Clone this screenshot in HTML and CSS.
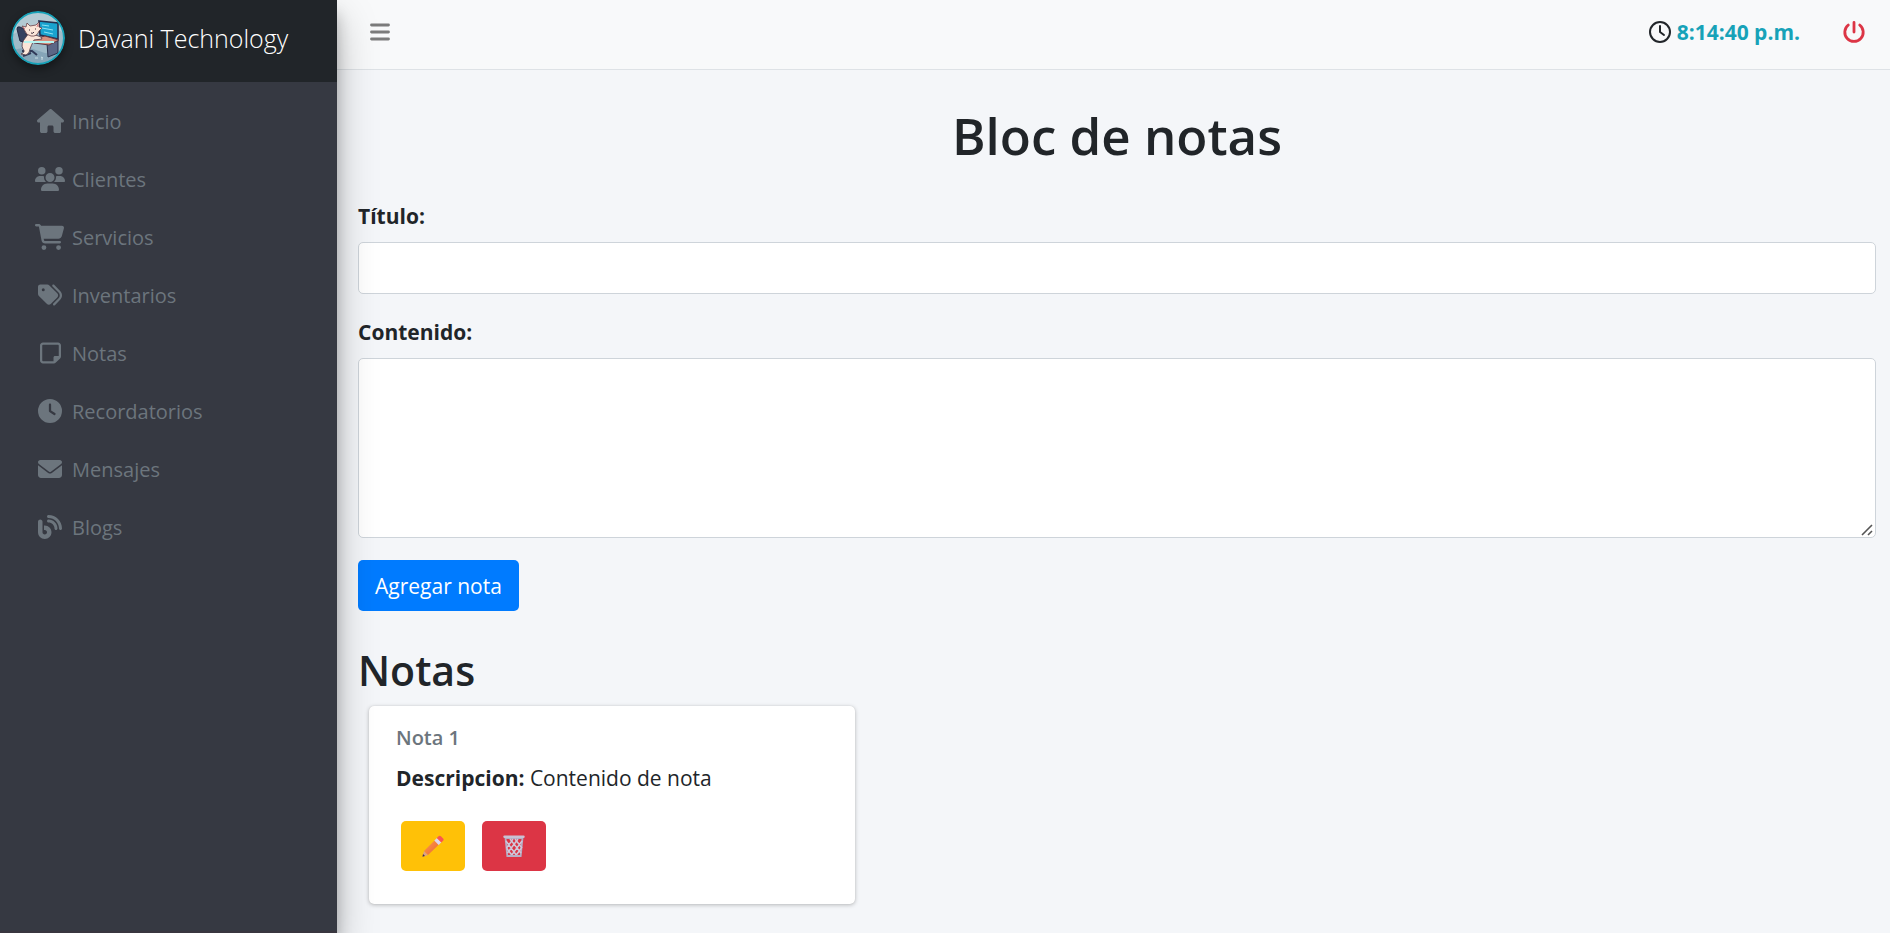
FILE: index.html
```
<!DOCTYPE html>
<html lang="es">
<head>
<meta charset="utf-8">
<meta name="viewport" content="width=device-width, initial-scale=1">
<title>Bloc de notas</title>
<link rel="stylesheet" href="styles.css">
</head>
<body>
<div class="wrapper">
  <aside class="sidebar">
    <a class="brand" href="#">
      <svg class="brand-logo" viewBox="0 0 54 54" aria-hidden="true">
        <defs><clipPath id="disc"><circle cx="27" cy="27" r="26"/></clipPath></defs>
        <g clip-path="url(#disc)">
          <rect width="54" height="54" fill="#9fbac8"/>
          <path d="M0 0h54v22L30 12 0 24z" fill="#b3cad3"/>
          <path d="M0 40q14-6 28 0t26-2v16H0z" fill="#86a5b8"/>
          <path d="M6 18q0-3 3-2l6 3 1 13-7-2z" fill="#35415f" stroke="#222943"/>
          <path d="M11 40h10l5 4M17 36v8M12 45l8-3" stroke="#303a58" stroke-width="2" fill="none"/>
          <path d="M28 10l19 2v16l-18-4z" fill="#1aa3cf" stroke="#25304f" stroke-width="1.6"/>
          <path d="M31 14l7 1M31 17l11 2M33 21l9 2" stroke="#8fe1f2"/>
          <path d="M36 32l11-2v12l-10 4z" fill="#5c6786" stroke="#28304b"/>
          <path d="M22 28l12-3 14 4-10 5-15-2z" fill="#d98f7e" stroke="#5b3845"/>
          <path d="M15 26q2-4 7-3l8 3 1 2-8 1q-3 6-4 9 0 4-4 6l-5-1q5-2 2-5-3-5 3-12z" fill="#fbe6d9" stroke="#4b3543" stroke-width=".8"/>
          <path d="M14 20l-3-5 4 1 1-4 3 3 6-1 3-3v5l3 1-3 3q-2 6-8 5-5-1-6-5z" fill="#fbe6d9" stroke="#6a4048" stroke-width=".8"/>
          <path d="M12 16l2 2M27 13l-1 3" stroke="#dd7f86"/>
          <path d="M18 19h1M24 18h1M20 22q2 1 3-1" stroke="#3b2a38" fill="none"/>
          <path d="M13 31h30" stroke="#b5f4ef" stroke-width="2"/>
          <path d="M24 47h3M30 46l2 1M31 49v-3" stroke="#c7dce3"/>
        </g>
        <circle cx="27" cy="27" r="26" fill="none" stroke="#17a2b8" stroke-width="2"/>
      </svg>
      <span>Davani Technology</span>
    </a>
    <nav class="menu">
      <a href="#"><span class="menu-icon"><svg viewBox="0 0 576 512"><path d="M575.8 255.5c0 18-15 32.1-32 32.1l-32 0 .7 160.2c0 2.7-.2 5.4-.5 8.1l0 16.2c0 22.1-17.9 40-40 40l-16 0c-1.1 0-2.2 0-3.3-.1c-1.4 .1-2.8 .1-4.2 .1L416 512l-24 0c-22.1 0-40-17.9-40-40l0-24 0-64c0-17.7-14.3-32-32-32l-64 0c-17.7 0-32 14.3-32 32l0 64 0 24c0 22.1-17.9 40-40 40l-24 0-31.9 0c-1.5 0-3-.1-4.5-.2c-1.2 .1-2.4 .2-3.6 .2l-16 0c-22.1 0-40-17.9-40-40l0-112c0-.9 0-1.9 .1-2.8l0-69.7-32 0c-18 0-32-14-32-32.1c0-9 3-17 10-24L266.4 8c7-7 15-8 22-8s15 2 21 7L564.8 231.5c8 7 12 15 11 24z"/></svg></span>Inicio</a>
      <a href="#"><span class="menu-icon"><svg viewBox="0 0 640 512"><path d="M144 0a80 80 0 1 1 0 160A80 80 0 1 1 144 0zM512 0a80 80 0 1 1 0 160A80 80 0 1 1 512 0zM0 298.7C0 239.8 47.8 192 106.7 192h42.7c15.9 0 31 3.5 44.6 9.7c-1.3 7.2-1.9 14.7-1.9 22.3c0 38.2 16.8 72.5 43.3 96c-.2 0-.4 0-.7 0H21.3C9.6 320 0 310.4 0 298.7zM405.3 320c-.2 0-.4 0-.7 0c26.6-23.5 43.3-57.8 43.3-96c0-7.6-.7-15-1.9-22.3c13.6-6.3 28.7-9.7 44.6-9.7h42.7C592.2 192 640 239.8 640 298.7c0 11.8-9.6 21.3-21.3 21.3H405.3zM224 224a96 96 0 1 1 192 0 96 96 0 1 1 -192 0zM128 485.3C128 411.7 187.7 352 261.3 352H378.7C452.3 352 512 411.7 512 485.3c0 14.7-11.9 26.7-26.7 26.7H154.7c-14.7 0-26.7-11.9-26.7-26.7z"/></svg></span>Clientes</a>
      <a href="#"><span class="menu-icon menu-icon-cart"><svg viewBox="0 0 576 512"><path d="M0 24C0 10.7 10.7 0 24 0H69.5c22 0 41.5 12.8 50.6 32h411c26.3 0 45.5 25 38.6 50.4l-41 152.3c-8.5 31.4-37 53.3-69.5 53.3H170.7l5.4 28.5c2.2 11.3 12.1 19.5 23.6 19.5H488c13.3 0 24 10.7 24 24s-10.7 24-24 24H199.7c-34.6 0-64.3-24.6-70.7-58.5L77.4 54.5c-.7-3.8-4-6.5-7.9-6.5H24C10.7 48 0 37.3 0 24zM128 464a48 48 0 1 1 96 0 48 48 0 1 1 -96 0zm336-48a48 48 0 1 1 0 96 48 48 0 1 1 0-96z"/></svg></span>Servicios</a>
      <a href="#"><span class="menu-icon"><svg viewBox="0 0 512 512"><path d="M345 39.1L472.8 168.4c52.4 53 52.4 138.2 0 191.2L360.8 472.9c-9.3 9.4-24.5 9.5-33.9 .2s-9.5-24.5-.2-33.9L438.6 325.9c33.9-34.3 33.9-89.4 0-123.7L310.9 72.9c-9.3-9.4-9.2-24.6 .2-33.9s24.6-9.2 33.9 .2zM0 229.5V80C0 53.5 21.5 32 48 32H197.5c17 0 33.3 6.7 45.3 18.7l168 168c25 25 25 65.5 0 90.5L277.3 442.7c-25 25-65.5 25-90.5 0l-168-168C6.7 262.7 0 246.5 0 229.5zM144 144a32 32 0 1 0 -64 0 32 32 0 1 0 64 0z"/></svg></span>Inventarios</a>
      <a href="#"><span class="menu-icon"><svg viewBox="0 0 448 512"><path d="M64 80c-8.8 0-16 7.2-16 16V416c0 8.8 7.2 16 16 16H288V352c0-17.7 14.3-32 32-32h80V96c0-8.8-7.2-16-16-16H64zM288 480H64c-35.3 0-64-28.7-64-64V96C0 60.7 28.7 32 64 32H384c35.3 0 64 28.7 64 64V320v5.5c0 17-6.7 33.3-18.7 45.3l-90.5 90.5c-12 12-28.3 18.7-45.3 18.7H288z"/></svg></span>Notas</a>
      <a href="#"><span class="menu-icon"><svg viewBox="0 0 512 512"><path d="M256 0a256 256 0 1 1 0 512A256 256 0 1 1 256 0zM232 120V256c0 8 4 15.5 10.7 20l96 64c11 7.4 25.9 4.4 33.3-6.7s4.4-25.9-6.7-33.3L280 243.2V120c0-13.3-10.7-24-24-24s-24 10.7-24 24z"/></svg></span>Recordatorios</a>
      <a href="#"><span class="menu-icon"><svg viewBox="0 0 512 512"><path d="M48 64C21.5 64 0 85.5 0 112c0 15.1 7.1 29.3 19.2 38.4L236.8 313.6c11.4 8.5 27 8.5 38.4 0L492.8 150.4c12.1-9.1 19.2-23.3 19.2-38.4c0-26.5-21.5-48-48-48H48zM0 176V384c0 35.3 28.7 64 64 64H448c35.3 0 64-28.7 64-64V176L294.4 339.2c-22.8 17.1-54 17.1-76.8 0L0 176z"/></svg></span>Mensajes</a>
      <a href="#"><span class="menu-icon"><svg viewBox="0 0 512 512"><path d="M192 32c0 17.7 14.3 32 32 32c123.7 0 224 100.3 224 224c0 17.7 14.3 32 32 32s32-14.3 32-32C512 128.9 383.1 0 224 0c-17.7 0-32 14.3-32 32zm0 96c0 17.7 14.3 32 32 32c70.7 0 128 57.3 128 128c0 17.7 14.3 32 32 32s32-14.3 32-32c0-106-86-192-192-192c-17.7 0-32 14.3-32 32zM96 144c0-26.5-21.5-48-48-48S0 117.5 0 144V368c0 79.5 64.5 144 144 144s144-64.5 144-144s-64.5-144-144-144H128v96h16c26.5 0 48 21.5 48 48s-21.5 48-48 48s-48-21.5-48-48V144z"/></svg></span>Blogs</a>
    </nav>
  </aside>
  <div class="page">
    <header class="topbar">
      <button class="icon-button toggle" type="button" aria-label="Menú">
        <svg viewBox="0 0 20 18" width="20" height="18"><path d="M1.500 2h17M1.500 9h17M1.500 16h17" stroke="currentColor" stroke-width="2.800" stroke-linecap="round"/></svg>
      </button>
      <div class="topbar-end">
        <div class="clock">
          <svg viewBox="0 0 22 22" width="22" height="22" fill="none" stroke="currentColor" stroke-width="2" stroke-linecap="round" stroke-linejoin="round" aria-hidden="true"><circle cx="11" cy="11" r="10"/><path d="M11 5v6l4 3"/></svg>
          <time>8:14:40 p.m.</time>
        </div>
        <button class="icon-button power" type="button" aria-label="Salir">
          <svg viewBox="0 0 22 22" width="22" height="22" fill="none" stroke="currentColor" stroke-width="2.8" stroke-linecap="round"><path d="M11 1.500v9.500M5.300 4a9.200 9.200 0 1 0 11.400 0"/></svg>
        </button>
      </div>
    </header>
    <main class="content">
      <h1>Bloc de notas</h1>
      <form class="note-form">
        <label for="titulo">Título:</label>
        <input id="titulo" type="text">
        <label for="contenido">Contenido:</label>
        <textarea id="contenido"></textarea>
        <button class="submit" type="button">Agregar nota</button>
      </form>
      <h2>Notas</h2>
      <article class="card">
        <h3>Nota 1</h3>
        <p><strong>Descripcion:</strong> Contenido de nota</p>
        <div class="actions">
          <button class="edit" type="button" aria-label="Editar">
            <svg viewBox="0 0 22 22" width="22" height="22">
              <defs><linearGradient id="wood" x1="0" y1="0" x2="1" y2="1"><stop offset="0" stop-color="#ff9b45"/><stop offset="1" stop-color="#e9643a"/></linearGradient></defs>
              <path d="M2 16l4 4-5.5 1.7z" fill="#d9a08c"/>
              <path d="M1 19l2 2-2.500.8z" fill="#44304a"/>
              <path d="M2 16L12.500 5.500l4.200 4.200L6 20z" fill="url(#wood)"/>
              <path d="M12.300 5.500L15 3l4.400 4.300-2.700 2.600z" fill="#ddd6ee"/>
              <path d="M14.800 3l1.700-1.800q1.300-1 2.600.2l2 2q1 1.200 0 2.400l-1.800 1.700z" fill="#fb5650"/>
            </svg>
          </button>
          <button class="delete" type="button" aria-label="Eliminar">
            <svg viewBox="0 0 22 22" width="22" height="22" fill="none">
              <path d="M2.500 3h17l-1.800 18H4.300z" stroke="#b5acc3" stroke-width="1.800"/>
              <path d="M3 6l11 15M7 4l11 14M12 4l7 9M3.500 13l6 8M19 6L8 21M15 4L4.500 18M10 4l-6.500 9M18.500 13l-6 8" stroke="#cfc8da" stroke-width="1.500"/>
              <path d="M1.500 1.800h19" stroke="#c9c1d2" stroke-width="2.400" stroke-linecap="round"/>
              <path d="M4.500 21h13" stroke="#b9b0c6" stroke-width="2"/>
            </svg>
          </button>
        </div>
      </article>
    </main>
  </div>
</div>
</body>
</html>
```
FILE: styles.css
```
* { box-sizing: border-box; }

body {
  margin: 0;
  background: #f4f6f9;
  color: #212529;
  font-family: "Segoe UI", "Open Sans", "Noto Sans", sans-serif;
  font-size: 21px;
  line-height: 32px;
}

button, input, textarea { font: inherit; }
button { cursor: pointer; }
svg { display: block; }

.wrapper {
  display: grid;
  grid-template-columns: 337px minmax(0, 1fr);
  min-height: 100vh;
}

.sidebar {
  position: relative;
  z-index: 1;
  background: #363942;
  border-bottom: 2px solid #39363f;
  box-shadow: 0 19px 38px rgba(0, 0, 0, .25), 0 14px 14px rgba(0, 0, 0, .22);
}

.brand {
  display: flex;
  align-items: center;
  gap: 13px;
  height: 82px;
  padding: 0 11px 6px;
  background: #212529;
  color: #fff;
  font-size: 25px;
  font-weight: 300;
  text-decoration: none;
  white-space: nowrap;
}

.brand-logo {
  flex: none;
  width: 54px;
  height: 54px;
  border-radius: 50%;
  box-shadow: 0 4px 8px rgba(0, 0, 0, .4);
}

.menu {
  display: flex;
  flex-direction: column;
  gap: 4px;
  padding: 13px 11px;
}

.menu a {
  display: flex;
  align-items: center;
  gap: 4px;
  height: 54px;
  padding: 0 22px 0 21px;
  color: #6c757d;
  font-size: 20px;
  text-decoration: none;
}

.menu-icon {
  display: flex;
  justify-content: center;
  width: 36px;
  padding-bottom: 2px;
}

.menu-icon svg { height: 24px; fill: currentColor; }
.menu-icon-cart svg { height: 26px; }

.topbar {
  display: flex;
  justify-content: space-between;
  align-items: flex-start;
  height: 70px;
  padding: 16px 25px 0 33px;
  background: #f8f9fa;
  border-bottom: 1px solid #dee2e6;
}

.topbar-end { display: flex; gap: 43px; }

.icon-button {
  display: flex;
  align-items: center;
  height: 32px;
  padding: 0;
  border: 0;
  background: none;
}

.toggle { color: #7b7b7b; }
.power { color: #dc3545; }

.clock {
  display: flex;
  align-items: center;
  gap: 6px;
}

.clock time { color: #17a2b8; font-weight: 700; }

.content { padding: 32px 14px 28px 21px; }

h1, h2, h3, p { margin: 0; }

h1 {
  font-size: 51px;
  font-weight: 600;
  line-height: 66px;
  text-align: center;
}

.note-form {
  display: flex;
  flex-direction: column;
  align-items: flex-start;
  padding-top: 32px;
}

.note-form label {
  margin-bottom: 10px;
  font-weight: 700;
}

.note-form input,
.note-form textarea {
  width: 100%;
  margin-bottom: 22px;
  padding: 8px 16px;
  border: 1px solid #ced4da;
  border-radius: 5px;
  background: #fff;
}

.note-form input { height: 52px; }
.note-form textarea { height: 180px; }

.note-form textarea::-webkit-resizer {
  background: url("data:image/svg+xml,%3Csvg xmlns='http://www.w3.org/2000/svg' width='15' height='15' viewBox='0 0 15 15'%3E%3Cpath d='M2 13L12 3M8 13l4-4' stroke='%23555' stroke-width='1.6'/%3E%3C/svg%3E") no-repeat right bottom;
}

.submit {
  height: 51px;
  padding: 0 17px;
  border: 0;
  border-radius: 5px;
  background: #007bff;
  color: #fff;
}

h2 {
  padding-top: 32px;
  font-size: 41px;
  font-weight: 600;
  line-height: 54px;
}

.card {
  width: 32%;
  margin: 9px 0 0 11px;
  padding: 16px 27px 33px;
  border-radius: 5px;
  background: #fff;
  box-shadow: 0 0 1px rgba(0, 0, 0, .13), 0 1px 4px rgba(0, 0, 0, .25);
}

h3 {
  color: #6c757d;
  font-size: 20px;
  font-weight: 600;
  line-height: 32px;
}

.card p { padding-top: 8px; }

.actions {
  display: flex;
  gap: 17px;
  padding: 27px 0 0 5px;
}

.edit,
.delete {
  display: grid;
  place-items: center;
  width: 64px;
  height: 50px;
  padding: 0;
  border: 0;
  border-radius: 5px;
}

.edit { background: #ffc107; }
.delete { background: #dc3545; }
```
